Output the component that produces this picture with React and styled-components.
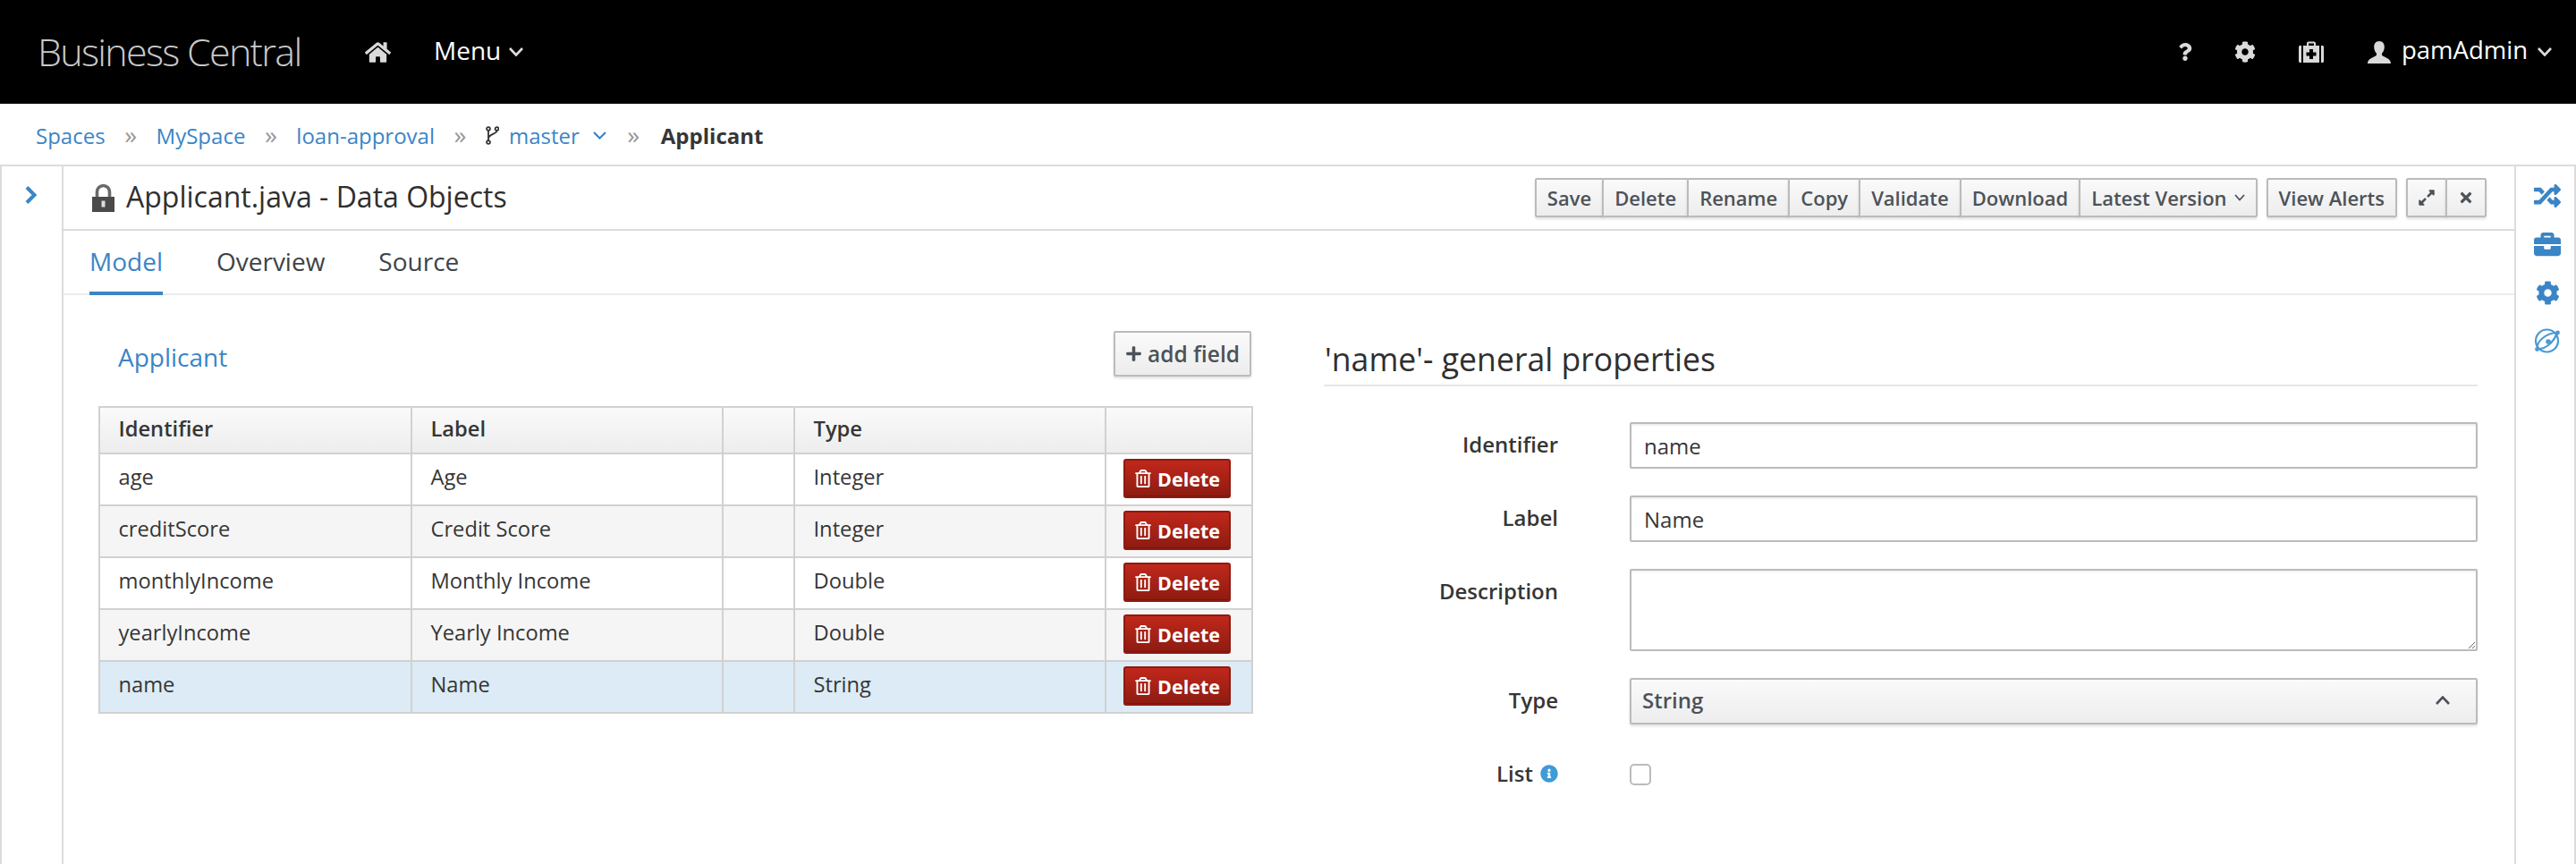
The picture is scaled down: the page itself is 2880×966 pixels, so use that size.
import React from 'react';
import styled, { createGlobalStyle } from 'styled-components';
import { FaHome, FaQuestion, FaCog, FaRandom, FaBriefcase, FaInfoCircle, FaRegTrashAlt, FaPlus, FaExpandAlt, FaTimes } from 'react-icons/fa';

const Global = createGlobalStyle`
  html, body { margin: 0; padding: 0; background: #fff; }
  body { font-family: "Open Sans", "Liberation Sans", sans-serif; color: #363636; font-size: 24px; }
  * { box-sizing: border-box; }
`;

const BLUE = '#3a85c6';
const GREY_LINE = '#dcdcdc';

const Page = styled.div`
  width: 2880px; height: 966px; overflow: hidden; display: flex; flex-direction: column;
`;

const TopBar = styled.header`
  height: 116px; background: #000; color: #fff; display: flex; align-items: center; padding: 0 27px 0 42px; flex: none;
`;
const Brand = styled.div`
  font-weight: 300; font-size: 43px; color: #c9c9c9; letter-spacing: -1.700px; width: 292px; white-space: nowrap; margin: -2px 74px 0 0; line-height: 1;
`;
const NavSvg = styled.span`
  display: flex; color: #dadada; margin-left: ${p => p.$ml || 0}px; svg { display: block; }
`;
const NavText = styled.span`
  font-size: ${p => p.$size || 28}px; color: #fff; margin-left: ${p => p.$ml || 0}px; margin-top: -5px;
`;
const Spacer = styled.div` flex: 1; `;

const Chevron = ({ w = 16, h = 10, sw = 2.6, color = 'currentColor', up }) => (
  <svg width={w} height={h} viewBox={`0 0 ${w} ${h}`} fill="none" stroke={color} strokeWidth={sw} style={{ display: 'block' }}>
    <polyline points={up ? `1,${h - 1} ${w / 2},1.5 ${w - 1},${h - 1}` : `1,1 ${w / 2},${h - 1.5} ${w - 1},1`} />
  </svg>
);
const ChevWrap = styled.span`
  display: inline-flex; margin-left: ${p => p.$ml || 0}px; color: ${p => p.$color || 'inherit'};
`;

const Medkit = () => (
  <svg width="28" height="24" viewBox="0 0 28 24" fill="#dadada">
    <path d="M9 5V2.5C9 1.4 9.9.5 11 .5h6c1.100 0 2 .9 2 2V5h-2V2.500h-6V5z" />
    <path d="M1.500 5H3v19H1.500C.7 24 0 23.300 0 22.500v-16C0 5.700.7 5 1.500 5zM25 5h1.500c.8 0 1.500.7 1.500 1.500v16c0 .8-.7 1.500-1.500 1.500H25z" />
    <path d="M5 5h18v19H5z" />
    <path fill="#000" d="M12 9h4v3.500h3.500v4H16V20h-4v-3.500H8.500v-4H12z" />
  </svg>
);
const UserBust = () => (
  <svg width="26" height="25" viewBox="0 0 26 25" fill="#dadada">
    <path d="M13 0c3.600 0 5.800 2.800 5.800 6.500 0 2.900-1.100 5.600-2.800 7.200-.3 1.300.1 2.300 1.300 3 2.700 1.400 8.700 3.300 8.700 8.300H0c0-5 6-6.900 8.700-8.300 1.200-.7 1.600-1.700 1.300-3-1.700-1.600-2.800-4.300-2.800-7.200C7.200 2.800 9.400 0 13 0z" />
  </svg>
);

const Crumbs = styled.nav`
  height: 70px; flex: none; border-bottom: 2px solid ${GREY_LINE}; display: flex; align-items: center; padding: 2px 0 0 40px; font-size: 24px;
`;
const Crumb = styled.a`
  color: ${BLUE}; white-space: nowrap;
`;
const CrumbCurrent = styled.span`
  font-weight: 700; color: #363636;
`;
const Sep = styled.span`
  width: ${p => p.$w || 57}px; text-align: center; color: #989898; font-size: 28px; line-height: 1; margin-top: -3px;
`;
const BranchWrap = styled.span`
  display: flex; margin-right: 11px;
`;
const Branch = () => (
  <svg width="15" height="21" viewBox="0 0 15 21" fill="none" stroke="#333" strokeWidth="1.800">
    <circle cx="3" cy="3" r="1.900" />
    <circle cx="12.500" cy="3" r="1.900" />
    <circle cx="3" cy="18" r="1.900" />
    <path d="M3 5v11M12.500 5c0 4-9.500 4-9.500 9" />
  </svg>
);

const Frame = styled.div`
  flex: 1; display: flex; min-height: 0; border-left: 2px solid ${GREY_LINE}; border-right: 2px solid ${GREY_LINE};
`;
const LeftRail = styled.aside`
  width: 69px; flex: none; border-right: 2px solid ${GREY_LINE}; padding: 22px 0 0 26px; color: ${BLUE};
`;
const RightRail = styled.aside`
  width: 67px; flex: none; border-left: 2px solid ${GREY_LINE}; display: flex; flex-direction: column; align-items: center; padding: 19px 0 0 5px; gap: 26px; color: ${BLUE};
`;
const RailIcon = styled.span`
  display: flex; height: 28px; align-items: center; justify-content: center;
`;
const Orbit = () => (
  <svg width="30" height="30" viewBox="0 0 30 30" fill="none" stroke="#4a9ad4" strokeWidth="2.200">
    <circle cx="14.500" cy="15" r="12.500" />
    <path d="M4 24C2 16 14 6 26 6" />
    <path d="M4 24C12 25 22 17 26 6" />
    <circle cx="3.500" cy="24.500" r="2.400" fill="#4a9ad4" stroke="none" />
    <circle cx="26.500" cy="6" r="2.400" fill="#4a9ad4" stroke="none" />
    <circle cx="16" cy="16" r="2.800" fill="#4a9ad4" stroke="none" />
  </svg>
);

const Main = styled.main`
  flex: 1; min-width: 0; display: flex; flex-direction: column;
`;
const TitleRow = styled.div`
  height: 72px; flex: none; border-bottom: 2px solid ${GREY_LINE}; display: flex; align-items: center; padding: 0 31px 0 32px;
`;
const Lock = () => (
  <svg width="25" height="32" viewBox="0 0 25 32" style={{ display: 'block' }}>
    <path d="M5.500 15V9.500a7 7 0 0 1 14 0V15" fill="none" stroke="#6a6a6a" strokeWidth="3.600" />
    <rect x="0" y="15" width="25" height="17" fill="#4a4a4a" />
    <rect x="10.500" y="19.500" width="4" height="7" fill="#ddd" />
  </svg>
);
const Title = styled.h1`
  margin: -4px 0 0 13px; font-size: 32px; font-weight: 400; color: #2f2f2f; white-space: nowrap; flex: 1;
`;
const BtnGroup = styled.div`
  display: flex; margin-left: 10px;
  & > * + * { margin-left: -2px; }
`;
const Btn = styled.button`
  height: 44px; padding: 0 ${p => p.$pad ?? 12}px; display: flex; align-items: center; gap: ${p => p.$gap ?? 6}px;
  border: 2px solid #bbb; border-radius: 2px; background: linear-gradient(#fafafa, #ededed);
  box-shadow: 0 2px 3px rgba(0,0,0,.12); font: 600 22px "Open Sans", sans-serif; color: #4d5258; white-space: nowrap;
`;

const Tabs = styled.div`
  height: 72px; flex: none; border-bottom: 2px solid #ececec; display: flex; padding-left: 29px;
`;
const Tab = styled.div`
  font-size: 28px; height: 72px; line-height: 68px; margin-right: ${p => p.$mr || 60}px; color: ${p => p.$active ? BLUE : '#3e4348'};
  border-bottom: ${p => p.$active ? `4px solid ${BLUE}` : 'none'};
`;

const Body = styled.div`
  flex: 1; display: grid; grid-template-columns: 1289px 1290px; column-gap: 81px; padding: 40px 0 0 39px;
`;
const TableHead = styled.div`
  display: flex; align-items: center; justify-content: space-between; height: 51px; margin-bottom: 33px;
`;
const EntityLink = styled.a`
  color: ${BLUE}; font-size: 28px; padding: 7px 0 0 22px;
`;
const AddBtn = styled(Btn)`
  height: 51px; padding: 0 11px; font-size: 24.500px; gap: 6px; margin: 0;
`;
const Table = styled.table`
  width: 1289px; table-layout: fixed; border-collapse: collapse; border: 2px solid #d1d1d1;
`;
const Th = styled.th`
  height: 52px; padding: 0 20.500px 4px; text-align: left; font-weight: 600; font-size: 23.700px; color: #363636;
  background: linear-gradient(#fafafa, #ededed); border: 2px solid #d1d1d1;
`;
const Td = styled.td`
  height: 58px; padding: 0 20.500px 6px; font-size: 23.700px; color: #363636; border: 2px solid #d1d1d1; background: ${p => p.$bg};
`;
const DelCell = styled(Td)`
  padding: 0 0 2px 19px;
`;
const DeleteBtn = styled.button`
  width: 120px; height: 44px; display: flex; align-items: center; justify-content: center; gap: 6px; padding: 0;
  border: 2px solid #8f1a12; border-radius: 3px; background: linear-gradient(#c0281b, #8d1b11); color: #fff;
  font: 700 21.500px "Open Sans", sans-serif; box-shadow: inset 0 -1px 0 rgba(0,0,0,.15);
`;

const PropTitle = styled.h3`
  margin: 0; height: 62px; font-size: 35.600px; font-weight: 400; color: #2f2f2f; border-bottom: 2px solid #e6e6e6; line-height: 62px; padding-left: 1px;
`;
const Form = styled.div`
  display: grid; grid-template-columns: 262px 948px; column-gap: 80px; row-gap: 30px; margin-top: 40px;
`;
const Label = styled.label`
  text-align: right; font-weight: 600; font-size: 24px; line-height: 50px; color: #363636; display: flex; justify-content: flex-end; align-items: center; height: 50px; gap: 8px;
`;
const Input = styled.input`
  width: 100%; height: 52px; border: 2px solid #bbb; border-radius: 2px; padding: 0 14px; font: 400 24px "Open Sans", sans-serif; color: #363636;
  box-shadow: inset 0 2px 2px rgba(0,0,0,.07); outline: none; background: #fff;
`;
const TextArea = styled.textarea`
  display: block; width: 100%; height: 92px; border: 2px solid #bbb; border-radius: 2px; padding: 8px 14px; resize: vertical;
  box-shadow: inset 0 2px 2px rgba(0,0,0,.05); outline: none;
`;
const SelectBox = styled(Btn)`
  width: 100%; height: 52px; justify-content: space-between; padding: 0 29px 3px 12px; font-size: 24px;
`;
const CheckRow = styled.div`
  height: 52px; display: flex; align-items: center;
`;
const Check = styled.input.attrs({ type: 'checkbox' })`
  appearance: none; margin: 0; width: 24px; height: 24px; border: 2px solid #bbb; border-radius: 5px; background: #fff;
`;

const rows = [
  ['age', 'Age', 'Integer', '#fff'],
  ['creditScore', 'Credit Score', 'Integer', '#f5f5f5'],
  ['monthlyIncome', 'Monthly Income', 'Double', '#fff'],
  ['yearlyIncome', 'Yearly Income', 'Double', '#f5f5f5'],
  ['name', 'Name', 'String', '#dcebf5'],
];

export default function App() {
  return (
    <Page>
      <Global />
      <TopBar>
        <Brand>Business Central</Brand>
        <NavSvg><FaHome size={29} /></NavSvg>
        <NavText $ml={48}>Menu</NavText>
        <ChevWrap $ml={9} $color="#ddd"><Chevron /></ChevWrap>
        <Spacer />
        <NavSvg><FaQuestion size={20} /></NavSvg>
        <NavSvg $ml={45}><FaCog size={24} /></NavSvg>
        <NavSvg $ml={48}><Medkit /></NavSvg>
        <NavSvg $ml={49}><UserBust /></NavSvg>
        <NavText $ml={12} $size={27.5}>pamAdmin</NavText>
        <ChevWrap $ml={11} $color="#ddd"><Chevron /></ChevWrap>
      </TopBar>
      <Crumbs>
        <Crumb>Spaces</Crumb>
        <Sep>»</Sep>
        <Crumb>MySpace</Crumb>
        <Sep>»</Sep>
        <Crumb>loan-approval</Crumb>
        <Sep>»</Sep>
        <BranchWrap><Branch /></BranchWrap>
        <Crumb>master</Crumb>
        <ChevWrap $ml={15} $color={BLUE}><Chevron w={15} h={9} sw={2.2} /></ChevWrap>
        <Sep $w={61}>»</Sep>
        <CrumbCurrent>Applicant</CrumbCurrent>
      </Crumbs>
      <Frame>
        <LeftRail>
          <svg width="14" height="20" viewBox="0 0 14 20" fill="none" stroke="currentColor" strokeWidth="4" style={{ display: 'block' }}>
            <polyline points="2,1.500 10.500,10 2,18.500" />
          </svg>
        </LeftRail>
        <Main>
          <TitleRow>
            <Lock />
            <Title>Applicant.java - Data Objects</Title>
            <BtnGroup>
              <Btn>Save</Btn>
              <Btn>Delete</Btn>
              <Btn>Rename</Btn>
              <Btn>Copy</Btn>
              <Btn>Validate</Btn>
              <Btn>Download</Btn>
              <Btn $gap={8}>Latest Version <Chevron w={12} h={8} sw={1.800} /></Btn>
            </BtnGroup>
            <BtnGroup><Btn>View Alerts</Btn></BtnGroup>
            <BtnGroup>
              <Btn $pad={11}><FaExpandAlt size={20} /></Btn>
              <Btn $pad={12}><FaTimes size={18} /></Btn>
            </BtnGroup>
          </TitleRow>
          <Tabs>
            <Tab $active>Model</Tab>
            <Tab>Overview</Tab>
            <Tab>Source</Tab>
          </Tabs>
          <Body>
            <section>
              <TableHead>
                <EntityLink>Applicant</EntityLink>
                <AddBtn><FaPlus size={19} />add field</AddBtn>
              </TableHead>
              <Table>
                <colgroup>
                  <col style={{ width: 349 }} />
                  <col style={{ width: 348 }} />
                  <col style={{ width: 80 }} />
                  <col style={{ width: 348 }} />
                  <col style={{ width: 164 }} />
                </colgroup>
                <thead>
                  <tr><Th>Identifier</Th><Th>Label</Th><Th /><Th>Type</Th><Th /></tr>
                </thead>
                <tbody>
                  {rows.map(([id, label, type, bg]) => (
                    <tr key={id}>
                      <Td $bg={bg}>{id}</Td>
                      <Td $bg={bg}>{label}</Td>
                      <Td $bg={bg} />
                      <Td $bg={bg}>{type}</Td>
                      <DelCell $bg={bg}><DeleteBtn><FaRegTrashAlt size={20} />Delete</DeleteBtn></DelCell>
                    </tr>
                  ))}
                </tbody>
              </Table>
            </section>
            <section>
              <PropTitle>'name'- general properties</PropTitle>
              <Form>
                <Label>Identifier</Label>
                <Input defaultValue="name" />
                <Label>Label</Label>
                <Input defaultValue="Name" />
                <Label>Description</Label>
                <TextArea />
                <Label>Type</Label>
                <SelectBox>String <Chevron w={16} h={10} color="#4d5258" up /></SelectBox>
                <Label>List <FaInfoCircle size={20} color="#3f9bd6" /></Label>
                <CheckRow><Check /></CheckRow>
              </Form>
            </section>
          </Body>
        </Main>
        <RightRail>
          <RailIcon><FaRandom size={30} /></RailIcon>
          <RailIcon><FaBriefcase size={30} /></RailIcon>
          <RailIcon><FaCog size={27} /></RailIcon>
          <RailIcon><Orbit /></RailIcon>
        </RightRail>
      </Frame>
    </Page>
  );
}
